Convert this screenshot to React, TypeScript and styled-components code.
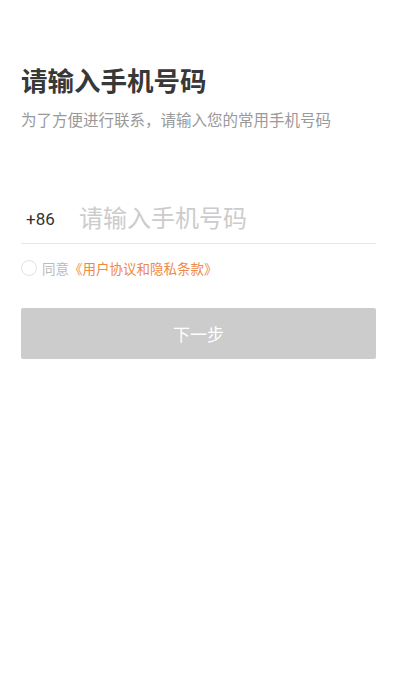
import React, { useState } from "react";
import styled, { createGlobalStyle } from "styled-components";

const GlobalStyle = createGlobalStyle`
  html, body {
    margin: 0;
    padding: 0;
    background: #fff;
  }
  body {
    font-family: Roboto, "Noto Sans CJK SC", sans-serif;
  }
  * {
    box-sizing: border-box;
  }
`;

const Page = styled.div`
  width: 100%;
  min-height: 700px;
  padding: 64px 21px 0;
  background: #fff;
`;

const Title = styled.h1`
  margin: 0;
  font-size: 26.5px;
  line-height: 36px;
  font-weight: 700;
  color: #383838;
`;

const Subtitle = styled.p`
  margin: 10px 0 0;
  font-size: 15.5px;
  line-height: 22px;
  color: #999;
`;

const PhoneRow = styled.div`
  display: flex;
  align-items: center;
  height: 49px;
  margin-top: 63px;
  border-bottom: 1px solid #e6e6e6;
`;

const Prefix = styled.span`
  width: 58px;
  padding-left: 5px;
  font-size: 17px;
  color: #333;
`;

const PhoneInput = styled.input`
  flex: 1;
  min-width: 0;
  border: none;
  outline: none;
  padding: 0;
  font-family: inherit;
  font-size: 24px;
  color: #333;
  background: transparent;

  &::placeholder {
    color: #ccc;
  }
`;

const AgreeRow = styled.label`
  display: flex;
  align-items: center;
  height: 22px;
  margin-top: 13px;
  font-size: 13.5px;
  color: #bbb;
  cursor: pointer;
`;

const Radio = styled.span<{ $checked: boolean }>`
  width: 16px;
  height: 16px;
  margin-right: 5px;
  border-radius: 50%;
  border: 1px solid ${(p) => (p.$checked ? "#f0883e" : "#e3e3e3")};
  background: ${(p) => (p.$checked ? "#f0883e" : "#fff")};
`;

const Link = styled.span`
  color: #ee8a45;
`;

const NextButton = styled.button`
  display: block;
  width: 100%;
  height: 51px;
  margin-top: 29px;
  border: none;
  border-radius: 2px;
  background: #cccccc;
  color: #fff;
  font-family: inherit;
  font-size: 17px;
`;

const App: React.FC = () => {
  const [agreed, setAgreed] = useState(false);

  return (
    <Page>
      <GlobalStyle />
      <Title>请输入手机号码</Title>
      <Subtitle>为了方便进行联系，请输入您的常用手机号码</Subtitle>
      <PhoneRow>
        <Prefix>+86</Prefix>
        <PhoneInput type="tel" placeholder="请输入手机号码" />
      </PhoneRow>
      <AgreeRow onClick={() => setAgreed(!agreed)}>
        <Radio $checked={agreed} />
        同意<Link>《用户协议和隐私条款》</Link>
      </AgreeRow>
      <NextButton disabled>下一步</NextButton>
    </Page>
  );
};

export default App;
